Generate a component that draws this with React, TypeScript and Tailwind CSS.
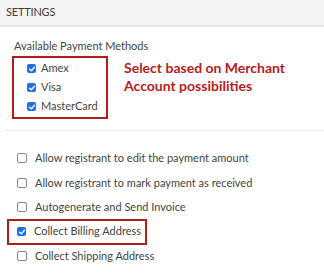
const font = { fontFamily: "Lato, 'Open Sans', sans-serif" };

function Box({ checked }: { checked: boolean }) {
  if (checked) {
    return (
      <span className="flex h-[9px] w-[9px] shrink-0 items-center justify-center rounded-[2px] bg-[#1e6ff0]">
        <svg viewBox="0 0 10 10" className="h-[8px] w-[8px]">
          <path d="M2 5.2 L4.2 7.3 L8 2.8" fill="none" stroke="#fff" strokeWidth="1.8" strokeLinecap="round" strokeLinejoin="round" />
        </svg>
      </span>
    );
  }
  return <span className="h-[10px] w-[10px] shrink-0 rounded-[2px] border border-[#8a8a8a] bg-white" />;
}

const methods = ["Amex", "Visa", "MasterCard"];

const options = [
  { label: "Allow registrant to edit the payment amount", checked: false },
  { label: "Allow registrant to mark payment as received", checked: false },
  { label: "Autogenerate and Send Invoice", checked: false },
  { label: "Collect Billing Address", checked: true, highlight: true },
  { label: "Collect Shipping Address", checked: false },
];

export default function App() {
  return (
    <div className="h-[280px] w-[324px] overflow-hidden bg-white text-[#444]" style={font}>
      {/* Header */}
      <div className="flex h-[27px] items-center border-b-2 border-[#e6e6e6] bg-[#f4f4f4] pl-[6px] text-[11px] tracking-[-0.2px] text-[#3d3d3d]">
        SETTINGS
      </div>

      {/* Payment methods */}
      <div className="pl-[12px] pt-[12px]">
        <div className="pl-[2px] text-[11px] leading-[14px]">Available Payment Methods</div>
        <div className="mt-[3px] flex">
          <div className="flex h-[63px] w-[96px] flex-col justify-center gap-[8px] border-2 border-[#b41c1c] pl-[13px]">
            {methods.map((m) => (
              <div key={m} className="flex h-[11px] items-center gap-[5px] text-[11px]">
                <Box checked />
                <span>{m}</span>
              </div>
            ))}
          </div>
          <div className="ml-[16px] pt-[3px] text-[14px] font-bold leading-[18px] text-[#b71c1c]">
            Select based on Merchant
            <br />
            Account possibilities
          </div>
        </div>
      </div>

      <div className="ml-[5px] mt-[11px] border-t border-[#ebebeb]" />

      {/* Options */}
      <div className="mt-[15px] flex flex-col pl-[7px]">
        {options.map((o) => (
          <div
            key={o.label}
            className={`flex items-center gap-[8px] text-[11px] ${
              o.highlight
                ? "-my-[1px] h-[26px] w-[140px] border-2 border-[#b41c1c] pl-[8px]"
                : "h-[24.5px] pl-[10px]"
            }`}
          >
            <Box checked={o.checked} />
            <span>{o.label}</span>
          </div>
        ))}
      </div>
    </div>
  );
}
